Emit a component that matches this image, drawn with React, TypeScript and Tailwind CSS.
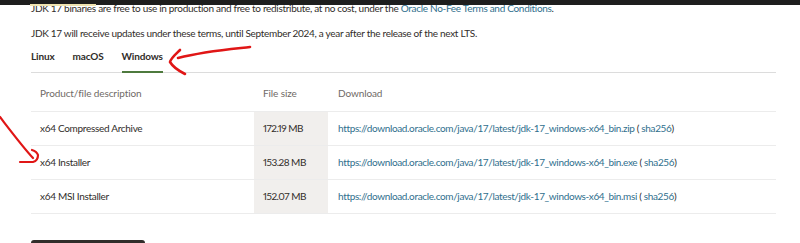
import React from "react";

interface FileRow {
  desc: string;
  size: string;
  url: string;
}

const rows: FileRow[] = [
  { desc: "x64 Compressed Archive", size: "172.19 MB", url: "https://download.oracle.com/java/17/latest/jdk-17_windows-x64_bin.zip" },
  { desc: "x64 Installer", size: "153.28 MB", url: "https://download.oracle.com/java/17/latest/jdk-17_windows-x64_bin.exe" },
  { desc: "x64 MSI Installer", size: "152.07 MB", url: "https://download.oracle.com/java/17/latest/jdk-17_windows-x64_bin.msi" },
];

const App: React.FC = () => {
  return (
    <div className="relative w-[800px] h-[243px] overflow-hidden bg-white font-['Lato','Liberation_Sans',sans-serif] text-[#312d2a]">
      {/* header bar cut off at top of the capture */}
      <div className="absolute left-0 top-0 h-[5px] w-full bg-[#1e1e1e]" />
      <div className="absolute left-[30px] top-[4px] h-[2px] w-[66px] bg-[#efe3b0]" />

      <div className="pl-[31px] pr-[24px]">
        <p className="pt-[1px] text-[10px] leading-[14px] tracking-[-0.3px]">
          JDK 17 binaries are free to use in production and free to redistribute, at no cost, under the{" "}
          <a className="text-[#2f6f8d]">Oracle No-Fee Terms and Conditions</a>.
        </p>
        <p className="mt-[11px] text-[10px] leading-[14px] tracking-[-0.3px]">
          JDK 17 will receive updates under these terms, until September 2024, a year after the release of the next LTS.
        </p>

        {/* tabs */}
        <div className="mt-[9px] flex border-b border-[#dcdcdc] text-[10px] font-bold tracking-[-0.15px]">
          <div className="pb-[8px] mr-[18px]">Linux</div>
          <div className="pb-[8px] mr-[18px]">macOS</div>
          <div className="-mb-px border-b-2 border-[#4e7a3e] pb-[7px]">Windows</div>
        </div>

        {/* table */}
        <div className="mt-[12px]">
          <div className="flex h-[27px] items-start border-b border-[#ececec] pt-[1px] text-[10px] tracking-[-0.1px] text-[#6f6a66]">
            <div className="w-[223px] pl-[9px]">Product/file description</div>
            <div className="w-[74px] pl-[9px]">File size</div>
            <div className="pl-[10px]">Download</div>
          </div>
          {rows.map((row, i) => (
            <div key={i} className="flex h-[34px] items-center border-b border-[#ececec] text-[10px]">
              <div className="w-[223px] pl-[9px] tracking-[-0.3px]">{row.desc}</div>
              <div className="flex h-full w-[74px] items-center bg-[#f1efed] pl-[9px] proportional-nums tracking-[-0.5px]">{row.size}</div>
              <div className="pl-[10px] tracking-[-0.35px]">
                <a className="text-[#2f6f8d]">{row.url}</a> ( <a className="text-[#2f6f8d]">sha256</a>)
              </div>
            </div>
          ))}
        </div>

        <div className="mt-[26px] h-[8px] w-[114px] rounded-[3px] bg-[#312d2a]" />
      </div>

      {/* red hand-drawn annotations */}
      <svg className="pointer-events-none absolute left-0 top-0" width="800" height="243" viewBox="0 0 800 243" fill="none">
        <path d="M250 47 C232 49 205 51 178 58" stroke="#e01616" strokeWidth="2.6" strokeLinecap="round" />
        <path d="M180 50 C176 54 171 58 170 62 C173 67 179 71 185 74" stroke="#e01616" strokeWidth="2.6" strokeLinecap="round" strokeLinejoin="round" />
        <path d="M0 117 C10 130 22 146 33 158" stroke="#e01616" strokeWidth="2.2" strokeLinecap="round" />
        <path d="M32 150 C35 151 37 152 38 155 C38 158 37 161 33 162 L20 162" stroke="#e01616" strokeWidth="2.2" strokeLinecap="round" strokeLinejoin="round" />
      </svg>
    </div>
  );
};

export default App;
